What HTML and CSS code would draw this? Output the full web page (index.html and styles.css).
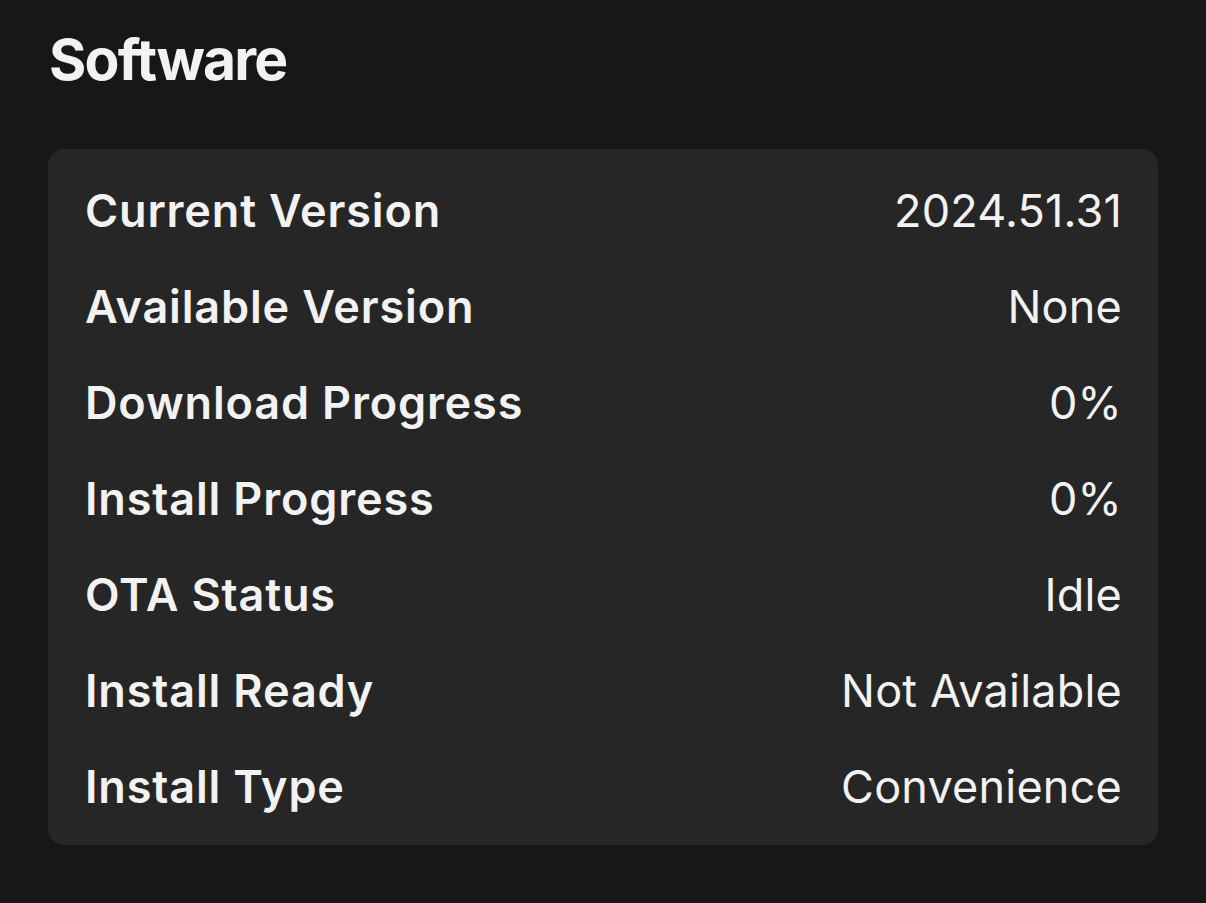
FILE: index.html
```html
<!DOCTYPE html>
<html lang="en">
<head>
    <meta charset="UTF-8">
    <title>Software</title>
    <link rel="stylesheet" href="styles.css">
</head>
<body>
    <div class="pagina">
        <h1 class="titulo">Software</h1>

        <div class="cartao">
            <div class="linha"><span class="rotulo">Current Version</span><span class="valor">2024.51.31</span></div>
            <div class="linha"><span class="rotulo">Available Version</span><span class="valor">None</span></div>
            <div class="linha"><span class="rotulo">Download Progress</span><span class="valor">0%</span></div>
            <div class="linha"><span class="rotulo">Install Progress</span><span class="valor">0%</span></div>
            <div class="linha"><span class="rotulo">OTA Status</span><span class="valor">Idle</span></div>
            <div class="linha"><span class="rotulo">Install Ready</span><span class="valor">Not Available</span></div>
            <div class="linha"><span class="rotulo">Install Type</span><span class="valor">Convenience</span></div>
        </div>
    </div>
</body>
</html>
```

FILE: styles.css
```css
body {
    margin: 0;
    background-color: #171717;
    font-family: Inter, "Noto Sans", sans-serif;
    color: #f2f2f2;
    height: 903px;
}

.pagina {
    padding: 22px 48px 0 48px;
}

.titulo {
    margin: 0 0 51px 1px;
    font-size: 57px;
    font-weight: 700;
    line-height: 76px;
    letter-spacing: -1.8px;
}

.cartao {
    background-color: #262626;
    border-radius: 16px;
    padding: 13px 36px 11px 37px;
}

.linha {
    display: flex;
    justify-content: space-between;
    align-items: center;
    height: 96px;
    font-size: 45px;
}

.rotulo {
    font-weight: 600;
    letter-spacing: 0.85px;
}

.valor {
    font-weight: 400;
    letter-spacing: 0.2px;
}
```
